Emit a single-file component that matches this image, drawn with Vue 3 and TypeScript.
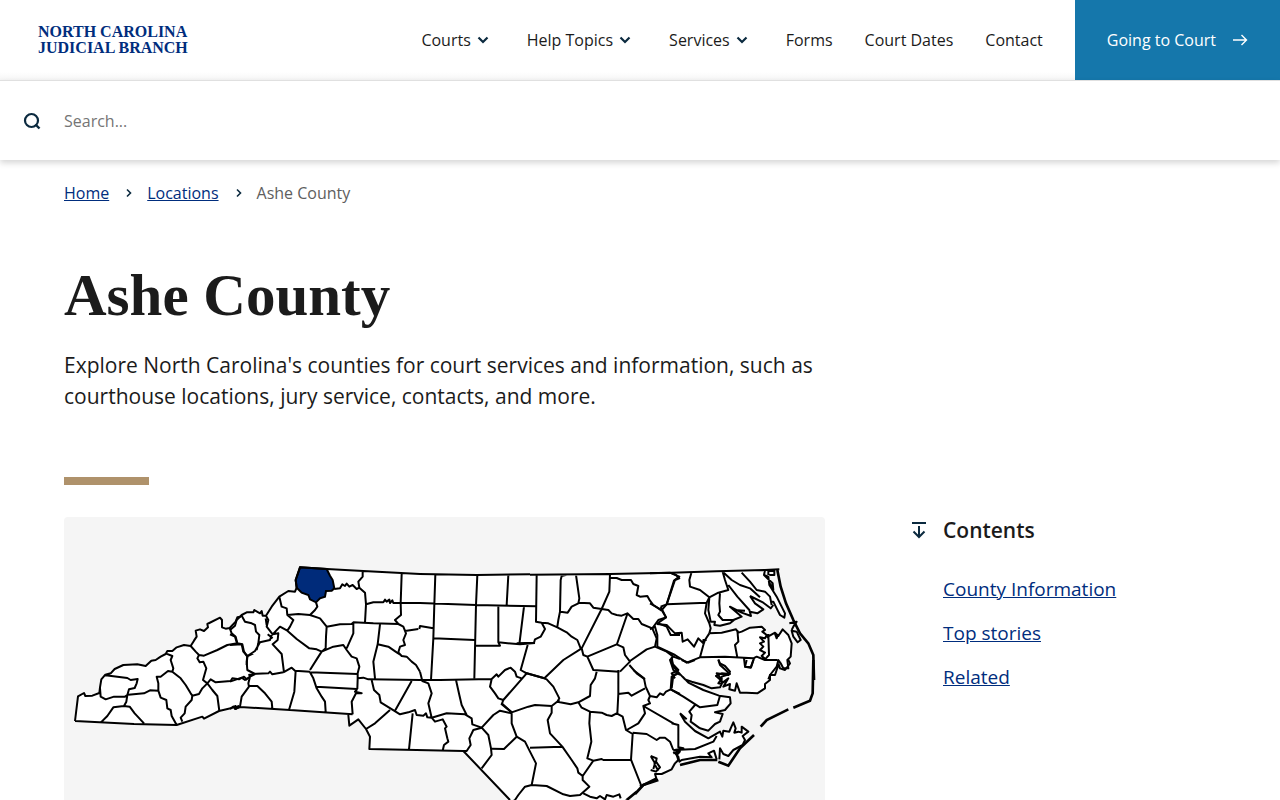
<script setup lang="ts">
interface NavItem { label: string; menu: boolean }
interface MapSheet { x: number; y: number; land: string; lines: string; shore?: string }

const navItems: NavItem[] = [
  { label: 'Courts', menu: true },
  { label: 'Help Topics', menu: true },
  { label: 'Services', menu: true },
  { label: 'Forms', menu: false },
  { label: 'Court Dates', menu: false },
  { label: 'Contact', menu: false },
]

const crumbs: string[] = ['Home', 'Locations']
const contents: string[] = ['County Information', 'Top stories', 'Related']

// The state map is drawn in sheets, each with its own origin.
const sheets: MapSheet[] = [
  {
    x: 0, y: 249,
    land: 'M33,363 L42,289 60,279 64,288 85,287 106,279 108,262 112,238 124,224 140,220 152,207 178,195 245,198 262,182 305,162 310,153 325,153 338,142 360,135 380,138 398,110 395,92 408,88 420,93 432,72 468,53 474,82 497,84 515,65 530,50 570,50 570,323 525,323 465,333 420,352 338,375Z',
    lines: 'M33,363 L42,289 60,279 64,288 85,287 106,279 108,262 112,238 124,224 140,220 152,207 178,195 220,193 245,198 262,182 275,180 290,170 305,162 310,153 325,153 338,142 360,135 380,138 390,122 398,110 395,92 408,88 420,93 432,82 430,72 468,53 474,60 474,82 485,86 497,84 515,65 520,52 530,50 M124,226 L190,234 200,240 221,237 218,250 212,264 195,268 190,285 183,290 150,290 125,298 110,290 108,265 M193,284 L240,280 258,271 283,272 M190,285 L187,305 180,318 M110,368 L130,348 148,322 180,318 197,320 212,340 240,370 M305,160 L325,168 320,180 328,205 325,215 312,213 290,230 278,230 283,250 283,272 290,293 307,300 310,325 320,330 323,348 338,375 M325,215 L350,235 365,255 380,280 385,287 383,300 365,320 362,340 350,353 355,365 M385,287 L405,282 415,265 430,250 M380,138 L395,155 405,165 400,175 407,187 418,185 427,205 417,240 430,250 445,270 460,288 466,333 M405,165 L420,167 460,150 490,135 520,130 535,133 540,155 550,170 548,195 M430,250 L440,238 455,247 500,243 505,235 525,238 540,230 550,240 M497,84 L503,100 515,110 520,130 M33,363 L210,372 338,375 415,350 420,356 465,333 500,325 515,318 515,327 523,318 525,325',
  },
  {
    x: 498, y: 114,
    land: 'M0,225 L20,195 35,180 70,172 73,165 90,175 108,182 125,155 148,125 175,108 195,110 200,98 197,75 210,37 290,42 570,57 570,480 368,478 180,465 0,460Z',
    lines: 'M0,225 L15,212 20,195 35,180 50,172 70,172 73,165 90,175 95,168 98,182 108,182 125,155 148,125 175,108 195,110 200,98 197,75 210,37 290,42 400,48 570,57 M313,102 L330,100 337,88 345,93 350,86 358,95 368,90 380,102 388,98 385,80 398,65 398,48 M388,98 L405,113 408,148 405,202 M408,148 L430,142 460,142 465,134 470,140 478,134 480,144 487,136 490,144 570,144 M515,57 L512,144 513,180 495,195 505,207 M258,142 L262,155 255,165 240,180 205,177 172,180 M148,125 L155,155 170,160 172,180 190,195 180,215 172,227 150,215 128,238 110,215 115,195 108,182 M240,180 L270,190 290,215 330,208 365,207 370,202 430,205 505,207 M290,215 L288,245 287,280 275,290 M370,205 L370,235 350,280 M275,290 L310,275 340,270 350,285 365,305 380,310 388,335 383,355 383,372 382,402 M172,227 L200,252 238,280 260,283 275,290 262,310 240,345 M450,208 L443,268 430,320 435,370 M443,268 L475,275 500,292 M505,207 L520,215 528,235 520,255 525,270 510,275 505,292 515,303 530,305 545,320 558,330 570,350 M500,292 L512,300 M525,228 L565,222 M383,370 L400,368 415,373 570,375 M240,352 L383,357 M258,395 L380,402 M240,352 L250,370 260,400 275,425 285,440 287,470 M382,402 L375,410 395,415 378,415 365,440 368,478 M160,352 L185,338 195,347 240,350 M197,347 L193,410 177,465 M128,238 L145,235 143,255 128,268 155,297 162,352 M55,360 L80,356 115,355 120,350 127,358 160,352 M0,270 L35,268 40,290 52,303 50,320 52,345 75,357 60,365 55,385 57,395 M52,303 L75,288 90,262 120,255 125,240 M35,182 L45,200 65,205 75,210 78,230 88,240 85,265 80,285 M0,238 L15,245 22,268 M107,190 L110,210 M113,238 L128,250 M50,305 L70,295 M0,380 L35,368 45,375 60,365 M57,393 L82,393 105,415 125,440 127,460 M57,395 L35,425 30,455 M0,462 L10,455 15,462 30,456 180,465 368,478',
  },
  {
    x: 828, y: 114,
    land: 'M0,45 L285,58 570,58 570,735 510,735 370,588 88,582 90,545 78,522 55,493 28,512 25,480 0,478Z',
    lines: 'M238,57 L285,58 410,60 570,58 M240,144 L408,150 590,154 M286,58 L283,148 280,250 273,375 M412,60 L408,150 403,370 M505,60 L500,150 M475,152 L475,262 480,272 408,272 M475,262 L540,268 585,264 M552,155 L538,268 M280,250 L403,255 M238,222 L240,213 280,220 M240,350 L247,378 265,385 275,415 265,445 275,488 M235,375 L300,375 455,372 M95,375 L102,405 118,420 122,442 162,467 M215,378 L165,467 M162,467 L180,478 205,472 225,465 230,480 250,482 258,475 262,487 275,488 320,475 375,478 395,490 397,508 425,518 M78,522 L105,505 150,465 M218,475 L207,583 M275,488 L285,500 308,493 320,515 315,520 322,550 325,560 312,570 308,587 M348,375 L358,420 365,450 380,480 M425,518 L400,525 388,550 392,570 380,588 370,588 M425,518 L445,540 453,580 455,600 425,640 M425,518 L460,480 480,467 515,475 M455,372 L450,395 465,415 475,430 490,435 M455,372 L470,358 475,365 495,345 512,338 525,350 530,365 545,370 M560,355 L490,435 485,448 515,472 M25,480 L28,512 55,493 78,522 90,545 88,582 370,588 510,735',
  },
  {
    x: 1308, y: 129,
    land: 'M0,44 L540,38 540,360 0,360Z',
    lines: 'M90,44 L330,42 510,38 M110,45 L108,185 125,188 145,190 172,202 200,217 215,230 232,240 242,265 M125,188 L135,207 122,230 105,238 102,248 50,250 M83,255 L62,330 80,340 133,355 190,300 245,265 M200,44 L185,48 182,60 180,155 175,180 172,200 M182,155 L203,158 215,140 235,130 238,115 228,45 M235,128 L270,130 280,143 305,147 328,95 330,42 M305,147 L245,265 M330,53 L350,54 365,60 393,60 400,72 415,78 410,105 420,110 442,108 450,122 460,135 485,152 M482,140 L500,133 525,60 538,55 528,45 510,38 M482,140 L498,172 475,180 457,205 M305,147 L325,150 335,160 350,165 365,167 382,160 400,177 415,177 425,192 457,205 470,235 465,260 M382,162 L350,255 M262,290 L350,253 370,262 375,285 390,305 360,335 M245,265 L250,285 262,290 280,330 358,335 M390,303 L440,268 465,260 500,275 520,290 540,297 M388,315 L410,340 435,358 M475,190 L500,200 512,225 540,225 M520,290 L510,300 520,330 540,345',
  },
  {
    x: 1308, y: 459,
    land: 'M0,0 L540,0 540,250 505,300 475,330 405,370 380,390 330,450 230,520 150,500 40,390 0,355Z',
    lines: 'M290,5 L285,25 272,45 270,78 235,97 212,103 180,97 172,95 178,85 160,50 140,28 133,25 75,8 M35,127 L85,110 105,105 155,108 M178,90 L155,108 155,128 143,150 150,190 187,230 M90,233 L187,230 215,270 232,295 235,308 248,318 280,272 M5,100 L35,127 35,160 50,200 75,215 90,245 108,280 95,345 75,350 55,375 45,390 M50,200 L12,237 -25,236 M235,97 L245,113 270,125 268,160 274,215 262,265 280,272 305,267 310,270 393,269 M270,125 L305,128 320,135 335,138 350,130 368,140 378,180 398,192 393,269 423,345 M355,0 L355,72 352,130 M355,72 L385,68 395,77 435,55 M400,0 L432,25 437,50 450,78 445,90 450,100 430,108 435,130 415,160 380,180 M450,78 L470,82 480,70 490,75 498,65 512,58 515,20 530,12 M512,58 L540,72 M430,108 L520,160 M398,188 L440,192 470,210 480,203 495,203 510,215 520,240 M95,345 L140,348 190,373 210,378 240,375 268,350 248,330 248,318 M250,370 L270,380 290,385 300,378 315,388 320,375 340,380 358,373 362,385 M380,390 L330,450 230,520 150,500 40,390 M452,258 L470,265 468,275 480,292 468,305 452,300 M462,280 L475,302 M452,258 L465,280 460,297 M540,245 L530,255 535,270 525,280 515,298 485,312 465,312 470,328 M520,240 L540,243 520,250',
    shore: 'M475,330 L430,345 405,372 M410,365 L380,390',
  },
  {
    x: 1758, y: 129,
    land: 'M0,40 L345,30 342,45 358,75 380,110 405,160 403,173 390,165 370,125 362,145 300,108 340,148 322,160 300,155 303,168 240,140 275,168 255,178 210,197 195,190 182,185 182,205 178,220 215,218 258,208 300,203 335,200 345,210 345,235 375,218 385,228 398,208 415,225 425,250 422,290 415,325 400,325 395,300 385,300 380,320 355,358 0,360Z',
    lines: 'M0,40 L65,38 200,34 345,30 388,28 M65,40 L88,50 72,62 50,133 35,150 M50,133 L170,128 M125,35 L118,60 120,80 150,90 178,112 170,128 165,160 178,190 182,205 178,220 M178,112 L205,98 235,90 225,60 218,35 M210,98 L208,130 210,155 205,165 218,180 250,180 275,170 240,140 275,158 303,168 298,150 262,110 235,75 M252,150 L285,152 M218,35 L245,60 270,75 300,85 330,112 M300,108 L315,130 340,148 322,160 300,155 M275,38 L300,65 320,90 345,95 360,110 365,135 M300,108 L340,128 362,145 370,135 M345,30 L342,45 352,55 368,70 370,90 360,70 M358,45 h15 v-12 h-18 v12 M342,45 L355,50 358,75 380,110 405,160 403,173 390,165 380,145 370,125 362,125 M178,112 L175,150 182,185 195,185 193,195 210,197 240,190 255,178 M178,220 L215,218 258,208 265,218 275,215 300,203 335,200 345,210 337,215 350,225 345,235 330,232 342,245 330,250 340,260 330,270 345,278 335,288 350,300 M262,210 L265,245 255,255 262,292 M178,220 L165,240 160,255 150,292 225,290 310,295 320,290 345,300 382,300 M20,192 L50,195 60,205 75,220 95,218 98,245 113,238 132,260 145,235 160,250 160,240 170,240 M0,208 L15,200 22,225 22,260 75,285 110,308 150,292 M20,192 L48,172 35,150 0,130 M355,222 L357,285 345,298 M350,232 L375,218 385,228 398,208 415,225 425,250 422,290 412,300 415,325 400,325 392,310 385,300 380,320 360,345 355,358 M375,222 L380,235 385,222 M425,212 L440,215 452,240 443,247 430,230Z M418,190 L440,185 430,200 425,210 M282,295 L285,320 303,322 312,295 M205,298 L210,310 225,318 240,335 235,345 200,340 215,358 M65,290 L68,312 85,330 65,340 75,355',
    shore: 'M382,30 L392,80 408,130 430,180 450,220 475,250 490,285 492,360',
  },
  {
    x: 1728, y: 429,
    land: 'M0,0 L412,0 412,20 405,45 375,85 352,98 298,95 250,80 245,50 270,42 240,35 228,48 240,82 128,50 237,107 270,112 272,130 222,157 248,162 205,212 165,195 120,162 165,215 205,235 240,215 255,225 280,187 285,215 305,200 325,215 308,255 265,290 240,298 215,285 125,305 105,275 80,330 50,350 0,378Z',
    lines: 'M95,0 L100,20 118,40 100,45 95,85 M118,40 L135,58 155,65 190,75 215,85 240,82 245,72 235,70 242,60 228,48 245,40 270,42 240,15 235,0 M128,50 L145,68 190,90 237,107 270,112 272,130 255,150 225,157 248,162 240,185 225,192 205,212 180,205 M92,88 L130,110 180,142 232,135 240,107 M165,135 L148,155 155,165 152,185 180,205 M120,160 L135,185 165,213 205,235 240,215 247,230 250,212 268,215 272,205 280,187 287,205 283,218 295,215 305,218 305,200 325,215 308,228 315,240 308,255 280,270 265,288 250,282 240,265 238,298 M120,160 L140,178 M95,190 L115,195 115,262 130,265 105,270 165,267 220,245 230,228 M100,275 L115,290 118,305 125,300 180,290 215,292 205,280 222,272 230,298 M270,42 L245,50 245,70 265,55 250,80 270,72 268,88 285,92 290,70 300,98 320,98 352,100 375,85 375,72 390,60 390,45 405,45 415,15 M320,0 L315,20 332,23 340,0 M415,10 L420,25 435,30 450,10 445,0 M125,0 L145,8 165,0',
    shore: 'M120,315 L180,300 232,300 M235,305 L265,317 300,265 342,225 M362,200 L380,180 445,148 M460,143 L510,122 518,100 520,0 M0,380 L50,355',
  },
]

const place = (s: MapSheet): string => `translate(${s.x} ${s.y})`
</script>

<template>
  <div class="page">
    <header class="top">
      <a class="logo" href="#">NORTH CAROLINA<br>JUDICIAL BRANCH</a>
      <nav class="nav" aria-label="Main">
        <template v-for="item in navItems" :key="item.label">
          <button v-if="item.menu" type="button" class="nav-item">
            {{ item.label }}
            <svg width="24" height="24" viewBox="0 0 24 24" aria-hidden="true"><path d="M7.500 9.500 12 14l4.500-4.500" fill="none" stroke="#0b2a3f" stroke-width="2.200" /></svg>
          </button>
          <a v-else href="#" class="nav-item">{{ item.label }}</a>
        </template>
      </nav>
      <a class="cta" href="#">
        Going to Court
        <svg width="16" height="16" viewBox="0 0 16 16" aria-hidden="true"><path d="M1 8h13.500M9.500 3 14.500 8l-5 5" fill="none" stroke="#fff" stroke-width="1.400" /></svg>
      </a>
    </header>

    <form class="search" role="search" @submit.prevent>
      <button type="submit" class="search-button" aria-label="Search">
        <svg width="18" height="18" viewBox="0 0 18 18" aria-hidden="true"><circle cx="8.500" cy="8.500" r="6.500" fill="none" stroke="#0b2a3f" stroke-width="2.200" /><path d="m12.500 12.500 4 4" stroke="#0b2a3f" stroke-width="2.400" /></svg>
      </button>
      <input type="search" class="search-input" placeholder="Search..." aria-label="Search the site">
    </form>

    <main class="main">
      <nav class="crumbs" aria-label="Breadcrumb">
        <template v-for="crumb in crumbs" :key="crumb">
          <a href="#">{{ crumb }}</a>
          <svg width="6" height="10" viewBox="0 0 6 10" aria-hidden="true"><path d="m1 1.500 3.500 3.500L1 8.500" fill="none" stroke="#0b2a3f" stroke-width="1.600" /></svg>
        </template>
        <span>Ashe County</span>
      </nav>

      <h1 class="title">Ashe County</h1>
      <p class="lead">Explore North Carolina's counties for court services and information, such as courthouse locations, jury service, contacts, and more.</p>
      <div class="rule"></div>

      <div class="columns">
        <figure class="map">
          <svg viewBox="0 0 2283 1080" role="img" aria-label="Map of North Carolina counties with Ashe County highlighted">
            <g v-for="sheet in sheets" :key="`land-${sheet.x}-${sheet.y}`" :transform="place(sheet)">
              <path class="land" :d="sheet.land" />
            </g>
            <path class="county" transform="translate(498 114)" d="M210,37 L290,42 300,62 308,75 313,100 305,107 288,108 285,125 270,130 258,142 240,133 235,120 215,113 200,98 197,75Z" />
            <g v-for="sheet in sheets" :key="`line-${sheet.x}-${sheet.y}`" :transform="place(sheet)">
              <path class="line" :d="sheet.lines" />
              <path v-if="sheet.shore" class="shore" :d="sheet.shore" />
            </g>
          </svg>
        </figure>

        <aside class="contents">
          <h2>
            <svg width="16" height="18" viewBox="0 0 16 18" aria-hidden="true"><path d="M1 2h14M8 5v11M2.500 10.500 8 16l5.500-5.500" fill="none" stroke="#0b2a3f" stroke-width="2" /></svg>
            Contents
          </h2>
          <ul>
            <li v-for="entry in contents" :key="entry"><a href="#">{{ entry }}</a></li>
          </ul>
        </aside>
      </div>
    </main>
  </div>
</template>

<style>
body {
  margin: 0;
  background: #fff;
}
</style>

<style scoped>
.page {
  font-family: "Open Sans", "Noto Sans", sans-serif;
  font-size: 16px;
  line-height: 24px;
  color: #1b1b1b;
}
.page * {
  box-sizing: border-box;
}
a {
  color: #002d7d;
  text-underline-offset: 1px;
}
svg {
  display: block;
  flex: none;
}
.top {
  display: flex;
  align-items: center;
  height: 80px;
  background: linear-gradient(#fff 72px, #f6f6f6);
}
.logo {
  margin-left: 38px;
  font-family: "Liberation Serif", serif;
  font-weight: 700;
  font-size: 16px;
  line-height: 16px;
  text-decoration: none;
}
.nav {
  display: flex;
  gap: 32px;
  margin: 0 32px 0 auto;
}
.nav-item {
  display: flex;
  align-items: center;
  padding: 0;
  border: 0;
  background: none;
  font: inherit;
  color: #1b1b1b;
  text-decoration: none;
  white-space: nowrap;
}
.cta {
  display: flex;
  align-items: center;
  gap: 16px;
  align-self: stretch;
  padding: 0 32px;
  background: #1577ab;
  color: #fff;
  font-weight: 500;
  text-decoration: none;
  white-space: nowrap;
}
.search {
  position: relative;
  display: flex;
  align-items: center;
  height: 80px;
  border-top: 1px solid #e0e0e0;
  background: #fff;
  box-shadow: 0 3px 6px rgba(0, 0, 0, 0.16);
}
.search-button {
  display: flex;
  justify-content: center;
  width: 64px;
  padding: 0;
  border: 0;
  background: none;
}
.search-input {
  flex: 1;
  height: 48px;
  padding: 0;
  border: 0;
  outline: 0;
  background: none;
  font: inherit;
}
.search-input::placeholder {
  color: #757575;
}
.main {
  padding: 21px 64px 32px;
}
.crumbs {
  display: flex;
  align-items: center;
  gap: 15px;
  color: #5e5e5e;
}
.crumbs svg {
  margin-left: 2px;
}
.title {
  margin: 54px 0 19px;
  font-family: "Liberation Serif", serif;
  font-weight: 700;
  font-size: 59px;
  line-height: 72px;
}
.lead {
  max-width: 768px;
  margin: 0;
  font-size: 21px;
  line-height: 31px;
}
.rule {
  width: 85px;
  height: 8px;
  margin: 65px 0 32px;
  background: #af926b;
}
.columns {
  display: grid;
  grid-template-columns: minmax(0, 761fr) minmax(0, 305fr);
  gap: 86px;
  align-items: start;
}
.map {
  margin: 0;
  border-radius: 4px;
  background: #f5f5f5;
}
.map svg {
  width: 100%;
  height: auto;
}
.land {
  fill: #fff;
}
.county {
  fill: #002b7a;
  stroke: #000;
  stroke-width: 6;
}
.line {
  fill: none;
  stroke: #000;
  stroke-width: 6;
  stroke-linejoin: round;
}
.shore {
  fill: none;
  stroke: #000;
  stroke-width: 8;
}
.contents h2 {
  display: flex;
  align-items: center;
  gap: 16px;
  margin: 0 0 32px;
  font-weight: 600;
  font-size: 21px;
  line-height: 26px;
}
.contents ul {
  display: grid;
  gap: 16px;
  margin: 0;
  padding: 0 0 0 32px;
  list-style: none;
  font-size: 19px;
  line-height: 28px;
}
</style>
